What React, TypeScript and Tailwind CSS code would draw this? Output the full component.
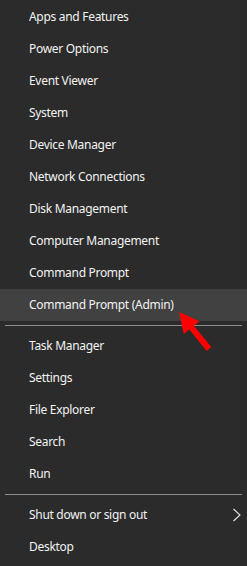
import React from "react";

const group1 = [
  "Apps and Features",
  "Power Options",
  "Event Viewer",
  "System",
  "Device Manager",
  "Network Connections",
  "Disk Management",
  "Computer Management",
  "Command Prompt",
  "Command Prompt (Admin)",
];
const group2 = ["Task Manager", "Settings", "File Explorer", "Search", "Run"];

function Row({ label, active, chevron }: { label: string; active?: boolean; chevron?: boolean }) {
  return (
    <div
      className={`h-[32px] flex items-center pl-[29px] pr-[5px] text-[12px] tracking-[-0.3px] text-[#f2f2f2] ${active ? "bg-[#414141]" : ""}`}
    >
      <span className="flex-1">{label}</span>
      {chevron && (
        <svg width="10" height="14" viewBox="0 0 10 14">
          <path d="M1.5 1 L8 7 L1.5 13" fill="none" stroke="#e8e8e8" strokeWidth="1.1" />
        </svg>
      )}
    </div>
  );
}

function Sep() {
  return (
    <div className="h-[9px] flex items-center px-[5px]">
      <div className="h-px w-full bg-[#8c8c8c]" />
    </div>
  );
}

export default function App() {
  return (
    <div
      className="relative w-[247px] h-[566px] bg-[#2b2b2b] pt-px overflow-hidden"
      style={{ fontFamily: '"Noto Sans", "Open Sans", sans-serif' }}
    >
      {group1.map((l) => (
        <Row key={l} label={l} active={l === "Command Prompt (Admin)"} />
      ))}
      <Sep />
      {group2.map((l) => (
        <Row key={l} label={l} />
      ))}
      <Sep />
      <Row label="Shut down or sign out" chevron />
      <Row label="Desktop" />
      <svg
        className="absolute left-[170px] top-[300px]"
        width="50"
        height="56"
        viewBox="0 0 50 56"
      >
        <polygon
          points="9,12 29.4,21.3 23.9,25.7 41.3,47.1 36.7,50.9 19.3,29.5 13.8,33.9"
          fill="#ff0000"
        />
      </svg>
    </div>
  );
}
